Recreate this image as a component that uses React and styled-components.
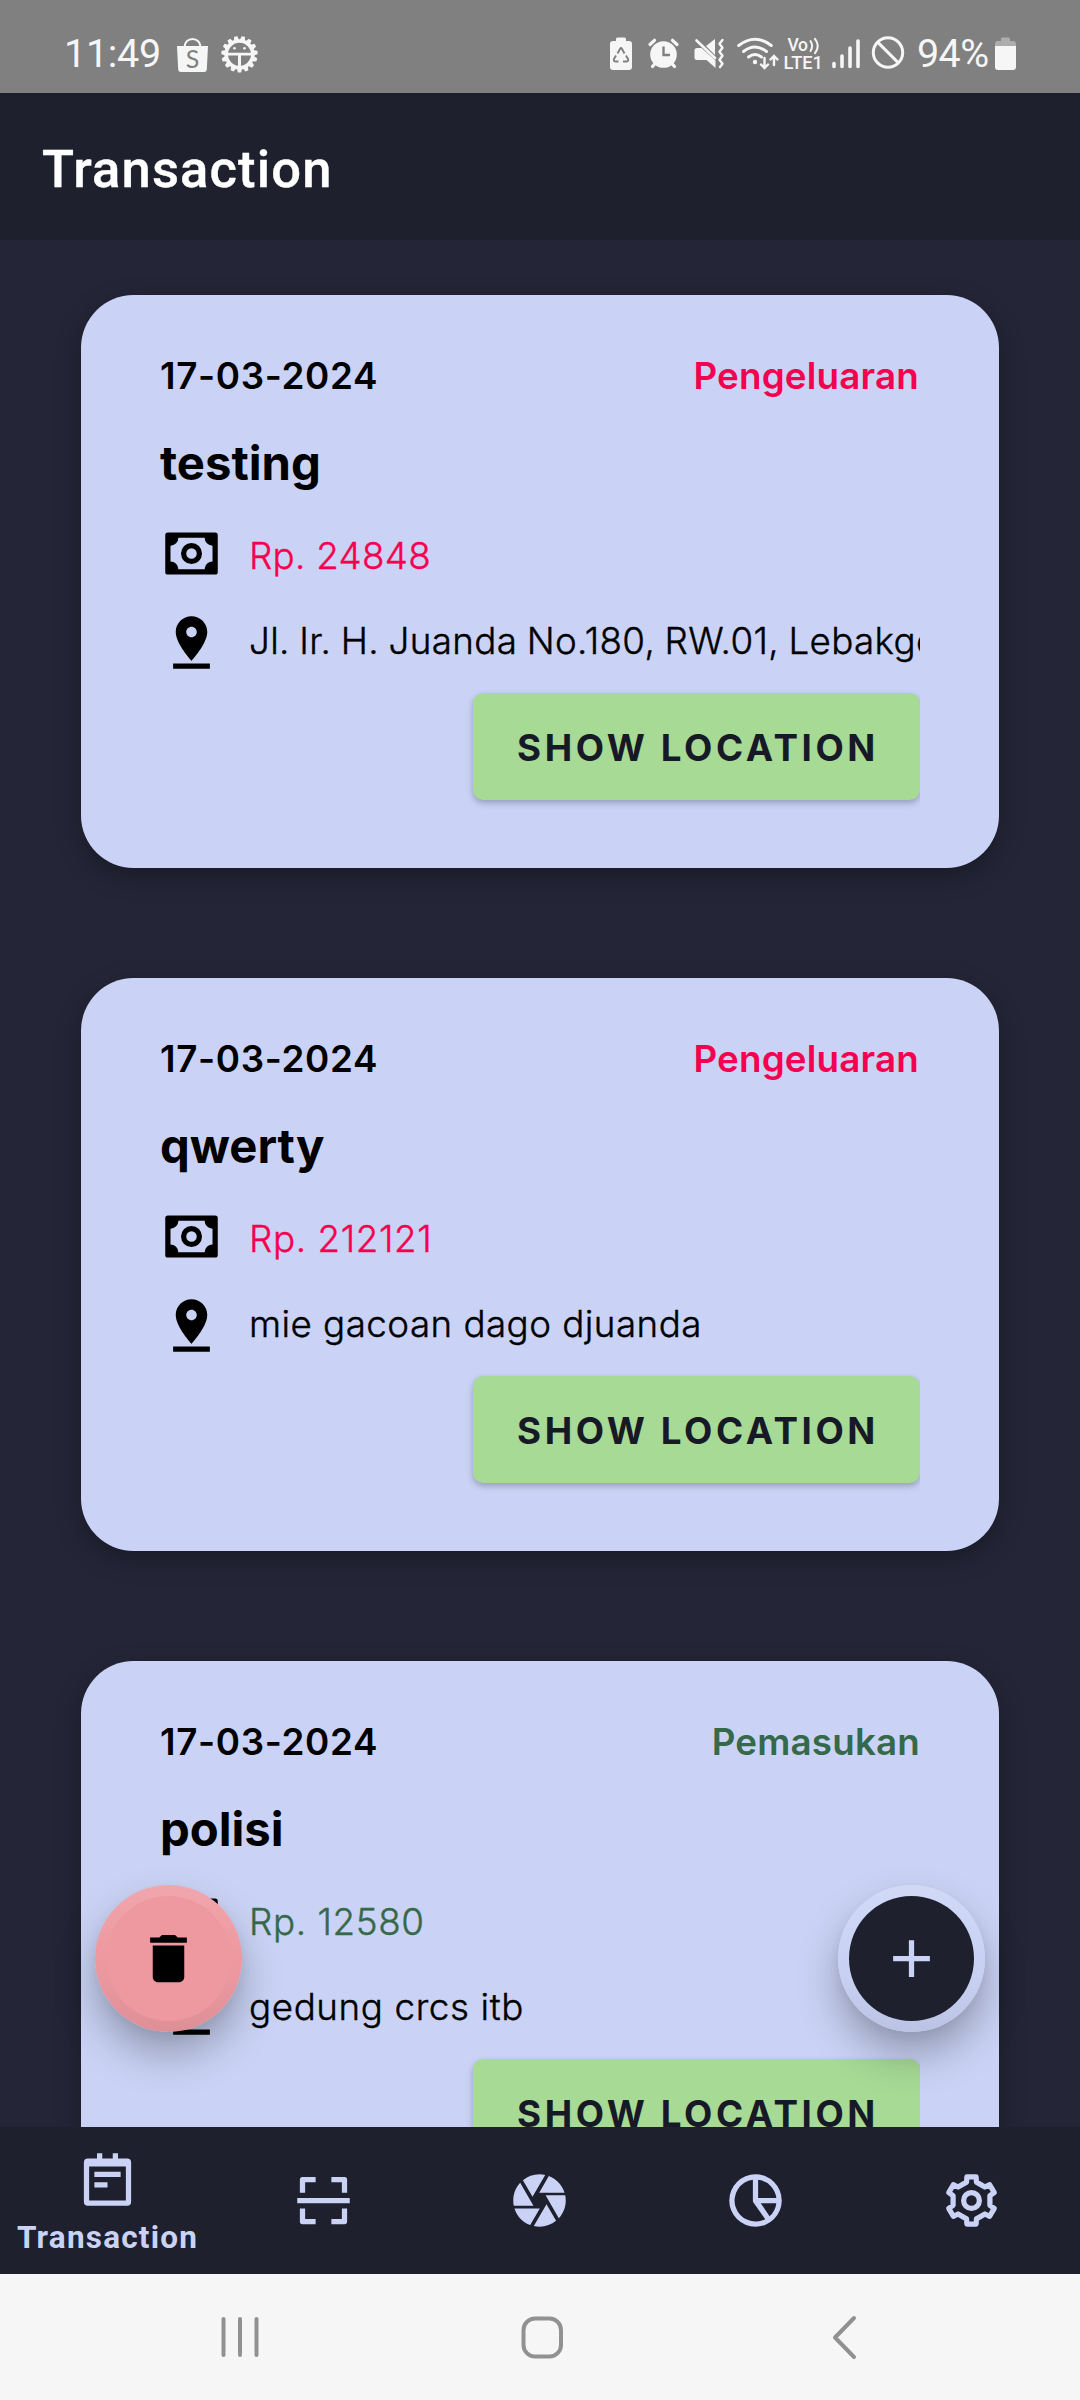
import React from "react";
import styled, { createGlobalStyle } from "styled-components";

const GlobalStyle = createGlobalStyle`
  * { box-sizing: border-box; }
  html, body { margin: 0; padding: 0; }
  body { background: #242538; font-family: Inter, "Liberation Sans", sans-serif; }
  svg { display: block; flex: none; }
`;

const Screen = styled.div`
  width: 1080px;
  height: 2400px;
  display: flex;
  flex-direction: column;
  overflow: hidden;
  background: #242537;
`;

/* ---------- status bar ---------- */

const StatusBar = styled.header`
  height: 93px;
  flex: none;
  display: flex;
  align-items: center;
  justify-content: space-between;
  padding: 15px 64px 0 64px;
  background: #808080;
  color: #f6f6f6;
  font-family: Roboto, sans-serif;
`;

const StatusGroup = styled.div`
  display: flex;
  align-items: center;
`;

const StatusText = styled.span`
  width: ${(p) => p.$w}px;
  font-size: 39.5px;
  line-height: 46px;
  letter-spacing: -0.3px;
  white-space: nowrap;
`;

const BatteryLevel = styled(StatusText)`
  margin-left: 13px;
  letter-spacing: -0.6px;
`;

const StatusSvg = styled.svg`
  height: 40px;
  margin-left: ${(p) => p.$ml || 0}px;
  overflow: visible;
`;

const StatusIcon = ({ x, w, ml, children }) => (
  <StatusSvg $ml={ml} width={w} viewBox={`${x} 34 ${w} 40`} fill="#f6f6f6">
    {children}
  </StatusSvg>
);

const gearTeeth = Array.from({ length: 15 }, (_, i) => i * 24 + 12);

const BagIcon = () => (
  <StatusIcon x={177} w={31} ml={15}>
    <path d="M184.5 47c0-4.500 3.500-8 8-8s8 3.500 8 8" fill="none" stroke="#f6f6f6" strokeWidth="2" />
    <path d="M177 46h31l-1.200 23.500q-.2 2.500-2.700 2.500h-23.200q-2.500 0-2.700-2.500z" />
    <text x="192.500" y="67.500" textAnchor="middle" fontFamily="Lato, sans-serif" fontSize="25" fill="#808080">S</text>
  </StatusIcon>
);

const GearFaceIcon = () => (
  <StatusIcon x={221} w={37} ml={13}>
    <g transform="translate(239.500 54.300)">
      {gearTeeth.map((a) => (
        <path key={a} transform={`rotate(${a})`} d="M-3-13L-1.600-18.200H1.600L3-13z" />
      ))}
      <circle r="13.300" fill="none" stroke="#f6f6f6" strokeWidth="3.600" />
      <path d="M-13-1.500H13V1.200H1.500V13H-1.500V1.200H-13z" />
      <circle cx="-5" cy="-6" r="1.300" />
      <circle cx="5" cy="-6" r="1.300" />
    </g>
  </StatusIcon>
);

const RecycleBatteryIcon = () => (
  <StatusIcon x={610} w={22}>
    <path d="M616 41v-2q0-1.500 1.500-1.500h7q1.500 0 1.500 1.500v2h3q3 0 3 3v23q0 3-3 3h-16q-3 0-3-3V44q0-3 3-3z" />
    <g fill="none" stroke="#808080" strokeWidth="1.900">
      <path d="M617.500 53.500l2.600-4.800q.9-1.400 1.800 0l2.600 4.800" />
      <path d="M616 55.500l-2 3.500q-.9 2.200 1.500 2.500h3" />
      <path d="M626 55.500l2 3.500q.9 2.200-1.500 2.500h-3.500" />
    </g>
  </StatusIcon>
);

const AlarmIcon = () => (
  <StatusIcon x={648} w={31} ml={16}>
    <circle cx="663.500" cy="54.500" r="13.300" />
    <g fill="none" stroke="#f6f6f6" strokeWidth="3.200" strokeLinecap="round">
      <path d="M650 44.500l4.500-4.200M677 44.500l-4.500-4.200M655.500 63l-3 3.500M671.500 63l3 3.500" />
    </g>
    <path d="M663.500 46.500v8.500h6.500" fill="none" stroke="#808080" strokeWidth="2.400" />
  </StatusIcon>
);

const MuteIcon = () => (
  <StatusIcon x={694} w={30} ml={15}>
    <path d="M697 48h4.500l14 12.500V68l-9-8h-9.500q-2.500 0-2.500-2.500v-7q0-2.500 2.500-2.500z" />
    <path d="M706 46l9-7v16z" />
    <path d="M696.500 40.500l18.500 17.500" fill="none" stroke="#f6f6f6" strokeWidth="2.600" strokeLinecap="round" />
    <path d="M722.500 40l-3 3.700 3 4-3 4 3 4-3 4 3 4-2.500 3.300" fill="none" stroke="#f6f6f6" strokeWidth="2.400" strokeLinecap="round" strokeLinejoin="round" />
  </StatusIcon>
);

const WifiIcon = () => (
  <StatusIcon x={737} w={42} ml={13}>
    <g fill="none" stroke="#f6f6f6" strokeWidth="2.900" strokeLinecap="round">
      <path d="M738.700 45.500q16.300-12.500 32.600 0" />
      <path d="M743.500 51.500q11.500-9 23 0" />
      <path d="M748.500 57q6.500-5 13 0" />
      <path d="M764.500 58v9M761 64.500l3.500 3.500 3.500-3.500M774 65v-8.500M770.500 59.500l3.500-3.500 3.500 3.500" strokeWidth="2.400" />
    </g>
    <circle cx="755" cy="62" r="2.200" />
  </StatusIcon>
);

const VolteIcon = () => (
  <StatusIcon x={784} w={39} ml={5}>
    <g fontFamily="Roboto, sans-serif" fontWeight="500">
      <text x="787.500" y="51" fontSize="17.500" textLength="20.500">Vo</text>
      <text x="783.500" y="68.700" fontSize="18" textLength="39.500" lengthAdjust="spacingAndGlyphs">LTE1</text>
    </g>
    <g fill="none" stroke="#f6f6f6" strokeWidth="2" strokeLinecap="round">
      <path d="M810.500 41q3.200 5 0 10M815 38.800q5.500 7.200 0 14.400" />
    </g>
  </StatusIcon>
);

const SignalIcon = () => (
  <StatusIcon x={832} w={28} ml={9}>
    <path d="M834 63.500v3M842 56v10.500M850 48v18.500M858 41v25.500" fill="none" stroke="#f6f6f6" strokeWidth="3.600" strokeLinecap="round" />
  </StatusIcon>
);

const BlockIcon = () => (
  <StatusIcon x={872} w={32} ml={12}>
    <g fill="none" stroke="#f6f6f6" strokeWidth="3">
      <circle cx="888" cy="52.500" r="14.700" />
      <path d="M877.600 42.100l20.800 20.800" />
    </g>
  </StatusIcon>
);

const BatteryIcon = () => (
  <StatusIcon x={995} w={21} ml={4}>
    <path d="M1001 41v-2q0-1.500 1.500-1.500h6q1.500 0 1.500 1.500v2h3q3 0 3 3v3h-21v-3q0-3 3-3z" fill="#adadad" />
    <path d="M995 46h21v21q0 3-3 3h-15q-3 0-3-3z" />
  </StatusIcon>
);

/* ---------- header ---------- */

const AppBar = styled.div`
  height: 147px;
  flex: none;
  display: flex;
  align-items: center;
  padding: 4px 42px 0;
  background: #1e202e;
`;

const AppTitle = styled.h1`
  margin: 0;
  font: 500 52.5px/62px Roboto, sans-serif;
  letter-spacing: 1.15px;
  -webkit-text-stroke: 0.4px currentColor;
  color: #fff;
`;

/* ---------- list ---------- */

const Content = styled.main`
  height: 1887px;
  flex: none;
  position: relative;
  overflow: hidden;
  padding: 55px 81px 0;
`;

const CardList = styled.div`
  display: flex;
  flex-direction: column;
  gap: 110px;
`;

const Card = styled.article`
  height: 573px;
  flex: none;
  padding: 58px 79px 0;
  border-radius: 52.5px;
  background: #cad3f5;
  box-shadow: 0 8px 26px rgba(0, 0, 0, 0.3);
`;

const CardHead = styled.div`
  display: flex;
  justify-content: space-between;
  font-size: 36.75px;
  line-height: 45px;
  font-weight: 600;
`;

const DateText = styled.time`
  letter-spacing: 0.65px;
  color: #000;
`;

const Kind = styled.span`
  letter-spacing: 0.2px;
  margin-right: ${(p) => (p.$income ? 0 : 1)}px;
  color: ${(p) => (p.$income ? "#35694a" : "#f5004f")};
`;

const CardTitle = styled.h2`
  margin: 36px 0 30px;
  font-size: 47.25px;
  line-height: 58px;
  font-weight: 700;
  color: #000;
`;

const InfoRow = styled.div`
  height: 63px;
  display: flex;
  gap: 26px;
  overflow: hidden;
  & + & { margin-top: 26px; }
`;

const InfoText = styled.span`
  padding-top: ${(p) => p.$top}px;
  font-size: 36.75px;
  line-height: 45px;
  font-weight: 300;
  -webkit-text-stroke: 0.4px currentColor;
  letter-spacing: ${(p) => p.$tracking ?? 0.6}px;
  word-spacing: ${(p) => p.$wordGap ?? 0}px;
  white-space: nowrap;
  color: ${(p) => p.$color || "#000"};
`;

const Actions = styled.div`
  display: flex;
  justify-content: flex-end;
  margin-top: 7px;
  padding: 12px 0 12px 12px;
  overflow: hidden;
`;

const LocationButton = styled.button`
  width: 447px;
  height: 107px;
  border: 0;
  border-radius: 10.5px;
  padding: 2px 0 0 3px;
  background: #a6da95;
  color: #181926;
  font: 700 36.75px/45px Inter, sans-serif;
  letter-spacing: 3.58px;
  white-space: nowrap;
  box-shadow: 0 3px 6px rgba(30, 32, 60, 0.3);
`;

const Fab = styled.button`
  position: absolute;
  top: 1645px;
  ${(p) => p.$side}: 95px;
  width: 147px;
  height: 147px;
  padding: 11px;
  border: 0;
  border-radius: 50%;
  background: ${(p) => p.$ring};
  box-shadow: 0 22px 42px rgba(0, 0, 0, 0.28), 0 5px 12px rgba(0, 0, 0, 0.05);
`;

const FabFace = styled.span`
  width: 125px;
  height: 125px;
  border-radius: 50%;
  display: flex;
  align-items: center;
  justify-content: center;
  background: ${(p) => p.$bg};
`;

const Icon24 = ({ d, fill = "#000" }) => (
  <svg width="63" height="63" viewBox="0 0 24 24" fill={fill} fillRule="evenodd">
    <path d={d} />
  </svg>
);

const cogAngles = [0, 60, 120, 180, 240, 300];
const cogOutline = cogAngles
  .flatMap((deg) => {
    const a = (deg * Math.PI) / 180;
    return [[-1.9, -7], [-1.75, -9], [1.75, -9], [1.9, -7]].map(
      ([x, y]) => `${x * Math.cos(a) - y * Math.sin(a)},${x * Math.sin(a) + y * Math.cos(a)}`
    );
  })
  .join(" ");

const CogIcon = () => (
  <svg width="63" height="63" viewBox="-12 -12 24 24" fill="none" stroke="#cad3f5" strokeWidth="2" strokeLinejoin="round">
    <polygon points={cogOutline} />
    <circle r="3" />
  </svg>
);

const icons = {
  cash:
    "M3 4h18q1 0 1 1v14q0 1-1 1H3q-1 0-1-1V5q0-1 1-1zM7 6a3 3 0 0 1-3 3v6a3 3 0 0 1 3 3h10a3 3 0 0 1 3-3V9a3 3 0 0 1-3-3zM12 8a4 4 0 1 1 0 8 4 4 0 0 1 0-8zm0 2a2 2 0 1 0 0 4 2 2 0 0 0 0-4z",
  pin: "M18 8c0-3.310-2.690-6-6-6S6 4.690 6 8c0 4.500 6 11 6 11s6-6.500 6-11zm-8 0c0-1.100.9-2 2-2s2 .9 2 2-.890 2-2 2c-1.100 0-2-.9-2-2zM5 20v2h14v-2H5z",
  trash: "M6 19c0 1.100.9 2 2 2h8c1.100 0 2-.9 2-2V7H6v12zM19 4h-3.500l-1-1h-5l-1 1H5v2h14V4z",
  plus: "M19 13h-6v6h-2v-6H5v-2h6V5h2v6h6v2z",
  note:
    "M8 2h2v2h4V2h2v2h3.500q1.500 0 1.500 1.500v15q0 1.500-1.500 1.500h-15q-1.500 0-1.500-1.500v-15Q3 4 4.500 4H8zM5 7v13h14V7zM7 9h10v2H7zM7 13h5v2H7z",
  scan:
    "M4 3h5v2H5v4H3V4q0-1 1-1zM15 3h5q1 0 1 1v5h-2V5h-4zM2 11h20v2H2zM3 15h2v4h4v2H4q-1 0-1-1zM19 15h2v5q0 1-1 1h-5v-2h4z",
  aperture:
    "M9.400 10.500l4.770-8.260C13.470 2.090 12.750 2 12 2c-2.400 0-4.600.85-6.320 2.250l3.660 6.350.06-.1zM21.540 9c-.92-2.920-3.150-5.260-6-6.340L11.880 9h9.660zm.26 1h-7.490l.29.5 4.760 8.250C21 16.970 22 14.610 22 12c0-.690-.070-1.350-.2-2zM8.540 12l-3.900-6.750C3.010 7.030 2 9.390 2 12c0 .690.070 1.350.2 2h7.490l-1.150-2zm-6.080 3c.92 2.920 3.150 5.260 6 6.340L12.120 15H2.460zm11.270 0l-3.900 6.760c.7.150 1.420.24 2.170.24 2.400 0 4.600-.85 6.320-2.250l-3.660-6.350-.93 1.600z",
  pie:
    "M12 2a10 10 0 1 1 0 20 10 10 0 0 1 0-20zM11 4.060A8 8 0 1 0 15.700 19.100L11.150 12.700Q11 12.400 11 12zM13 4.060V11h6.940A8 8 0 0 0 13 4.060zM14 13l3.350 5.000A8 8 0 0 0 19.940 13z",
};

/* ---------- bottom bars ---------- */

const TabBar = styled.nav`
  height: 147px;
  flex: none;
  display: grid;
  grid-template-columns: repeat(5, 1fr);
  background: #1e202e;
`;

const Tab = styled.a`
  display: flex;
  flex-direction: column;
  align-items: center;
  justify-content: ${(p) => (p.$active ? "flex-start" : "center")};
  padding: ${(p) => (p.$active ? 21 : 0)}px 1px 0 0;
  color: #cad3f5;
`;

const TabLabel = styled.span`
  margin-top: 8px;
  font: 700 31.5px/37px Roboto, sans-serif;
  letter-spacing: 1.2px;
`;

const SystemBar = styled.footer`
  height: 126px;
  flex: none;
  display: flex;
  align-items: center;
  gap: 242px;
  padding-left: 210px;
  background: #f6f6f6;
`;

const SystemIcon = ({ children }) => (
  <svg width="60" height="60" viewBox="0 0 60 60" fill="none" stroke="#919191" strokeWidth="4" strokeLinecap="round" strokeLinejoin="round">
    {children}
  </svg>
);

const transactions = [
  {
    date: "17-03-2024", kind: "Pengeluaran", title: "testing",
    amount: "Rp. 24848", amountTracking: 0.3,
    place: "Jl. Ir. H. Juanda No.180, RW.01, Lebakgede", placeTracking: 0.35, placeWordGap: -1.2,
  },
  {
    date: "17-03-2024", kind: "Pengeluaran", title: "qwerty",
    amount: "Rp. 212121", amountTracking: 0.6,
    place: "mie gacoan dago djuanda", placeTracking: 0.45,
  },
  { date: "17-03-2024", kind: "Pemasukan", title: "polisi", amount: "Rp. 12580", place: "gedung crcs itb", income: true },
];

const TransactionCard = ({ item }) => (
  <Card>
    <CardHead>
      <DateText>{item.date}</DateText>
      <Kind $income={item.income}>{item.kind}</Kind>
    </CardHead>
    <CardTitle>{item.title}</CardTitle>
    <InfoRow>
      <Icon24 d={icons.cash} />
      <InfoText $top={11} $tracking={item.amountTracking} $color={item.income ? "#35694a" : "#f5004f"}>
        {item.amount}
      </InfoText>
    </InfoRow>
    <InfoRow>
      <Icon24 d={icons.pin} />
      <InfoText $top={7} $tracking={item.placeTracking} $wordGap={item.placeWordGap}>
        {item.place}
      </InfoText>
    </InfoRow>
    <Actions>
      <LocationButton>SHOW LOCATION</LocationButton>
    </Actions>
  </Card>
);

const tabs = [
  { icon: "note", label: "Transaction" },
  { icon: "scan" },
  { icon: "aperture" },
  { icon: "pie" },
  { icon: "cog" },
];

export default function App() {
  return (
    <Screen>
      <GlobalStyle />
      <StatusBar>
        <StatusGroup>
          <StatusText $w={98}>11:49</StatusText>
          <BagIcon />
          <GearFaceIcon />
        </StatusGroup>
        <StatusGroup>
          <RecycleBatteryIcon />
          <AlarmIcon />
          <MuteIcon />
          <WifiIcon />
          <VolteIcon />
          <SignalIcon />
          <BlockIcon />
          <BatteryLevel $w={74}>94%</BatteryLevel>
          <BatteryIcon />
        </StatusGroup>
      </StatusBar>

      <AppBar>
        <AppTitle>Transaction</AppTitle>
      </AppBar>

      <Content>
        <CardList>
          {transactions.map((t) => (
            <TransactionCard key={t.title} item={t} />
          ))}
        </CardList>
        <Fab $side="left" $ring="linear-gradient(#f0a6ad, #ee99a0 45%, #ea979e 65%, #de8f96)" aria-label="Delete">
          <FabFace $bg="#ee99a0"><Icon24 d={icons.trash} /></FabFace>
        </Fab>
        <Fab $side="right" $ring="linear-gradient(#d1d9f6, #cad3f5 45%, #c7d0f1 65%, #bac3e3)" aria-label="Add">
          <FabFace $bg="#1e202e"><Icon24 d={icons.plus} fill="#cad3f5" /></FabFace>
        </Fab>
      </Content>

      <TabBar>
        {tabs.map((t) => (
          <Tab key={t.icon} $active={Boolean(t.label)}>
            {t.icon === "cog" ? <CogIcon /> : <Icon24 d={icons[t.icon]} fill="#cad3f5" />}
            {t.label && <TabLabel>{t.label}</TabLabel>}
          </Tab>
        ))}
      </TabBar>

      <SystemBar>
        <SystemIcon><path d="M13.500 12v36M30 12v36M46.500 12v36" /></SystemIcon>
        <SystemIcon><rect x="11.500" y="11.500" width="37.500" height="38" rx="11.500" /></SystemIcon>
        <SystemIcon><path d="M40 11L21 30.500L40 50" /></SystemIcon>
      </SystemBar>
    </Screen>
  );
}
